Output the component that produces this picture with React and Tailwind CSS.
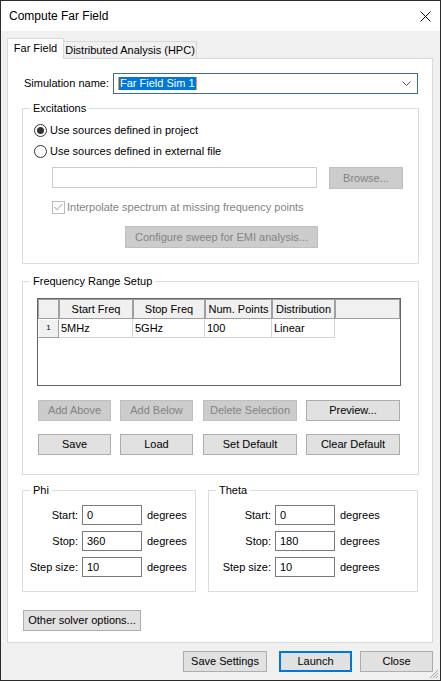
import React from 'react';

const btn = 'h-[21px] flex items-center justify-center border';
const normal = 'border-[#adadad] bg-[#e1e1e1] text-black';
const disabled = 'border-[#bfbfbf] bg-[#cccccc] text-[#838383]';

function Radio({ checked, children }) {
    return (
        <div className="flex items-center h-[16px]">
            <span className="w-[13px] h-[13px] rounded-full border border-[#333333] bg-white flex items-center justify-center">
                {checked && <span className="w-[7px] h-[7px] rounded-full bg-[#333333]" />}
            </span>
            <span className="ml-[3px]">{children}</span>
        </div>
    );
}

function HeadCell({ className, children }) {
    return (
        <div className={`h-full border border-[#a0a0a0] bg-[#f0f0f0] flex items-center justify-center ${className}`}>
            {children}
        </div>
    );
}

function Cell({ className, children }) {
    return <div className={`h-full border-r border-b border-[#d4d4d4] pl-[2px] flex items-center ${className}`}>{children}</div>;
}

function AngleRow({ label, value, labelW }) {
    return (
        <div className="flex items-center h-[20px]">
            <span className={`${labelW} text-right pr-[4px]`}>{label}</span>
            <div className="w-[60px] h-[20px] border border-[#7a7a7a] bg-white flex items-center pl-[4px]">{value}</div>
            <span className="ml-[5px]">degrees</span>
        </div>
    );
}

function AngleGroup({ title, w, labelW, rows }) {
    return (
        <fieldset className={`${w} border border-[#dcdcdc] pb-[14px]`}>
            <legend className="ml-[7px] px-[3px] leading-[14px]">{title}</legend>
            <div className="mt-[8px] flex flex-col gap-[6px]">
                {rows.map(([l, v]) => (
                    <AngleRow key={l} label={l} value={v} labelW={labelW} />
                ))}
            </div>
        </fieldset>
    );
}

export default function App() {
    return (
        <div className="w-[441px] h-[681px] border border-[#2b2b2b] flex flex-col font-['Liberation_Sans',Arial,sans-serif] text-[11px] text-black relative">
            {/* title bar */}
            <div className="h-[30px] bg-white flex items-center justify-between pl-[8px] pr-[9px]">
                <span className="text-[12px]">Compute Far Field</span>
                <svg width="11" height="11" viewBox="0 0 11 11">
                    <path d="M0.5 0.5 L10.5 10.5 M10.5 0.5 L0.5 10.5" stroke="#111" strokeWidth="1" />
                </svg>
            </div>

            <div className="flex-1 bg-[#f0f0f0] flex flex-col">
                {/* tabs */}
                <div className="flex items-end h-[20px] mt-[7px] ml-[6px]">
                    <div className="w-[57px] h-[21px] -mb-px relative z-10 bg-white border border-b-0 border-[#d9d9d9] flex items-center justify-center pb-[2px]">
                        Far Field
                    </div>
                    <div className="w-[133px] h-[17px] bg-[#f0f0f0] border border-b-0 border-l-0 border-[#d9d9d9] flex items-center justify-center">
                        Distributed Analysis (HPC)
                    </div>
                </div>

                {/* panel */}
                <div className="w-[426px] h-[585px] ml-[6px] border border-[#d9d9d9] bg-white flex flex-col">
                    <div className="flex items-center h-[21px] mt-[14px] pl-[16px]">
                        <span className="w-[89px]">Simulation name:</span>
                        <div className="w-[305px] h-[21px] border border-[#3d6a9c] flex items-center justify-between pl-[4px] pr-[6px]">
                            <span className="bg-[#0078d7] text-white leading-[13px] px-px border-l border-r border-[#f0a030]">Far Field Sim 1</span>
                            <svg width="9" height="5" viewBox="0 0 9 5">
                                <path d="M0.5 0.5 L4.5 4.5 L8.5 0.5" fill="none" stroke="#555" strokeWidth="1" />
                            </svg>
                        </div>
                    </div>

                    {/* excitations */}
                    <fieldset className="ml-[14px] w-[397px] mt-[7px] border border-[#dcdcdc] pb-[15px]">
                        <legend className="ml-[7px] px-[3px] leading-[14px]">Excitations</legend>
                        <div className="pl-[11px] mt-[7px] flex flex-col gap-[5px]">
                            <Radio checked>Use sources defined in project</Radio>
                            <Radio>Use sources defined in external file</Radio>
                        </div>
                        <div className="flex mt-[8px] pl-[29px]">
                            <div className="w-[265px] h-[21px] border border-[#cccccc] bg-white" />
                            <div className={`${btn} ${disabled} w-[74px] h-[22px] ml-[12px]`}>Browse...</div>
                        </div>
                        <div className="flex items-center h-[16px] mt-[10px] pl-[29px] text-[#838383]">
                            <span className="w-[13px] h-[13px] border border-[#bcbcbc] bg-white flex items-center justify-center">
                                <svg width="9" height="8" viewBox="0 0 9 8">
                                    <path d="M0.5 4 L3.2 6.8 L8.5 0.8" fill="none" stroke="#b8b8b8" strokeWidth="1.1" />
                                </svg>
                            </span>
                            <span className="ml-[2px]">Interpolate spectrum at missing frequency points</span>
                        </div>
                        <div className={`${btn} ${disabled} w-[193px] h-[22px] mt-[11px] ml-[102px]`}>Configure sweep for EMI analysis...</div>
                    </fieldset>

                    {/* frequency range */}
                    <fieldset className="ml-[14px] w-[397px] mt-[10px] border border-[#dcdcdc] pb-[19px]">
                        <legend className="ml-[7px] px-[3px] leading-[14px]">Frequency Range Setup</legend>
                        <div className="ml-[14px] mt-[10px] w-[364px] h-[88px] border border-[#646464] bg-white flex flex-col">
                            <div className="flex h-[20px]">
                                <HeadCell className="w-[21px]" />
                                <HeadCell className="w-[74px]">Start Freq</HeadCell>
                                <HeadCell className="w-[72px]">Stop Freq</HeadCell>
                                <HeadCell className="w-[67px]">Num. Points</HeadCell>
                                <HeadCell className="w-[63px]">Distribution</HeadCell>
                                <HeadCell className="flex-1" />
                            </div>
                            <div className="flex h-[19px]">
                                <div className="w-[21px] h-full bg-[#f0f0f0] border border-t-white border-l-white border-r-[#a0a0a0] border-b-[#a0a0a0] flex items-start justify-center pt-[2px] text-[8px]">1</div>
                                <Cell className="w-[74px]">5MHz</Cell>
                                <Cell className="w-[72px]">5GHz</Cell>
                                <Cell className="w-[67px]">100</Cell>
                                <Cell className="w-[63px]">Linear</Cell>
                            </div>
                        </div>
                        <div className="flex mt-[14px] ml-[15px]">
                            <div className={`${btn} ${disabled} w-[73px]`}>Add Above</div>
                            <div className={`${btn} ${disabled} w-[73px] ml-[9px]`}>Add Below</div>
                            <div className={`${btn} ${disabled} w-[94px] ml-[10px]`}>Delete Selection</div>
                            <div className={`${btn} ${normal} w-[94px] ml-[9px]`}>Preview...</div>
                        </div>
                        <div className="flex mt-[13px] ml-[15px]">
                            <div className={`${btn} ${normal} w-[73px]`}>Save</div>
                            <div className={`${btn} ${normal} w-[73px] ml-[9px]`}>Load</div>
                            <div className={`${btn} ${normal} w-[94px] ml-[10px]`}>Set Default</div>
                            <div className={`${btn} ${normal} w-[94px] ml-[9px]`}>Clear Default</div>
                        </div>
                    </fieldset>

                    {/* phi / theta */}
                    <div className="flex ml-[14px] mt-[8px] gap-[12px]">
                        <AngleGroup title="Phi" w="w-[174px]" labelW="w-[59px]" rows={[['Start:', '0'], ['Stop:', '360'], ['Step size:', '10']]} />
                        <AngleGroup title="Theta" w="w-[210px]" labelW="w-[66px]" rows={[['Start:', '0'], ['Stop:', '180'], ['Step size:', '10']]} />
                    </div>

                    <div className={`${btn} ${normal} w-[118px] mt-[18px] ml-[15px]`}>Other solver options...</div>
                </div>

                {/* bottom buttons */}
                <div className="flex justify-end mt-[8px] pr-[7px]">
                    <div className={`${btn} ${normal} w-[84px]`}>Save Settings</div>
                    <div className={`${btn} w-[73px] ml-[12px] border-2 border-[#0078d7] bg-[#e1e1e1]`}>Launch</div>
                    <div className={`${btn} ${normal} w-[73px] ml-[8px]`}>Close</div>
                </div>
            </div>

            {/* resize grip */}
            <svg className="absolute right-[1px] bottom-[1px]" width="10" height="10" viewBox="0 0 10 10">
                <path d="M9 1 L1 9 M9 4 L4 9 M9 7 L7 9" stroke="#a0a0a0" strokeWidth="1" />
            </svg>
        </div>
    );
}
